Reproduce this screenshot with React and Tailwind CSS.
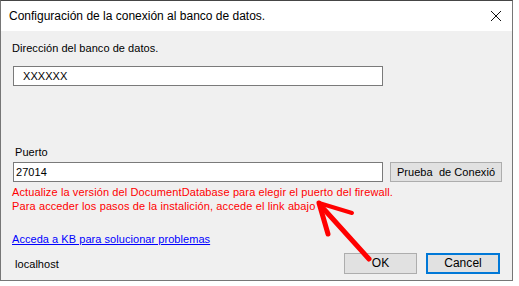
export default function App() {
  const ff = { fontFamily: '"Liberation Sans", Arial, sans-serif' };
  return (
    <div className="relative w-[519px] h-[286px] bg-white overflow-hidden" style={ff}>
      <div className="w-[513px] h-[281px] border border-[#767676] border-t-[#454545] flex flex-col">
        <div className="h-[30px] bg-white flex items-center justify-between shrink-0">
          <span className="pl-[8px] text-[12px] text-black leading-none">
            Configuración de la conexión al banco de datos.
          </span>
          <svg width="12" height="12" viewBox="0 0 12 12" className="mr-[10px]">
            <path d="M1 1 L11 11 M11 1 L1 11" stroke="#111" strokeWidth="1" />
          </svg>
        </div>
        <div className="flex-1 bg-[#f0f0f0] flex flex-col pl-[11px] text-[11px] leading-[13px] text-black tracking-[0.05px]">
          <div className="mt-[11px]">Dirección del banco de datos.</div>
          <div className="mt-[11px] ml-[1px] w-[370px] h-[20px] bg-white border border-[#7a7a7a] flex items-center pl-[9px]">
            XXXXXX
          </div>
          <div className="mt-[60px] ml-[3px]">Puerto</div>
          <div className="mt-[3px] ml-[1px] flex gap-[7px]">
            <div className="w-[370px] h-[20px] bg-white border border-[#7a7a7a] flex items-center pl-[2px]">27014</div>
            <div className="w-[112px] h-[20px] bg-[#e1e1e1] border border-[#adadad] flex items-center justify-center">
              Prueba&nbsp; de Conexió
            </div>
          </div>
          <div className="mt-[4px] text-[#ff0000] tracking-[0.12px]">
            Actualize la versión del DocumentDatabase para elegir el puerto del firewall.
          </div>
          <div className="mt-[1px] text-[#ff0000] tracking-[0.12px]">
            Para acceder los pasos de la instalición, accede el link abajo
          </div>
          <div className="mt-[20px]">
            <span className="text-[#0000ff] underline">Acceda a KB para solucionar problemas</span>
          </div>
          <div className="mt-[7px] flex items-center">
            <span className="ml-[3px] mt-[1px]">localhost</span>
            <div className="ml-auto flex gap-[9px] mr-[12px]">
              <div className="w-[73px] h-[21px] bg-[#e1e1e1] border border-[#adadad] flex items-center justify-center text-[12px]">OK</div>
              <div className="w-[74px] h-[21px] bg-[#e1e1e1] border-2 border-[#0078d7] flex items-center justify-center text-[12px]">Cancel</div>
            </div>
          </div>
        </div>
      </div>
      <svg className="absolute left-0 top-0 pointer-events-none" width="519" height="286">
        <g stroke="#ff0000" strokeLinecap="round" strokeLinejoin="round" fill="none">
          <path d="M369 259 L322 207" strokeWidth="5" />
          <path d="M319 203 L352 213" strokeWidth="4" />
          <path d="M319 203 L328 234" strokeWidth="5" />
        </g>
      </svg>
    </div>
  );
}
